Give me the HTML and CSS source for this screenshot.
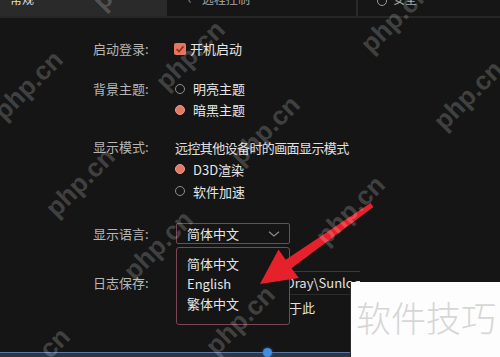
FILE: index.html
```html
<!DOCTYPE html>
<html lang="zh-CN">
<head>
<meta charset="utf-8">
<title>设置</title>
<link rel="stylesheet" href="styles.css">
</head>
<body>
<div class="app">
  <div class="tabs">
    <div class="tab tab-active"><span class="tab-label">常规</span></div>
    <div class="tab tab-remote"><span class="tab-ico">‹</span><span class="tab-label">远程控制</span></div>
    <div class="tab tab-safe"><span class="tab-ico tab-ico-round"></span><span class="tab-label">安全</span></div>
  </div>

  <div class="settings">
    <div class="row row-login">
      <div class="label">启动登录:</div>
      <div class="value">
        <div class="option">
          <span class="checkbox">
            <svg viewBox="0 0 12 12" width="12" height="12"><path d="M2.6 6.2 L5 8.5 L9.5 3.4" fill="none" stroke="#8e2f22" stroke-width="1.6"/></svg>
          </span>
          <span class="opt-text">开机启动</span>
        </div>
      </div>
    </div>

    <div class="row row-theme">
      <div class="label">背景主题:</div>
      <div class="value">
        <div class="option"><span class="radio"></span><span class="opt-text">明亮主题</span></div>
        <div class="option"><span class="radio radio-on"></span><span class="opt-text">暗黑主题</span></div>
      </div>
    </div>

    <div class="row row-mode">
      <div class="label">显示模式:</div>
      <div class="value">
        <div class="option"><span class="desc">远控其他设备时的画面显示模式</span></div>
        <div class="option"><span class="radio radio-on"></span><span class="opt-text">D3D渲染</span></div>
        <div class="option"><span class="radio"></span><span class="opt-text">软件加速</span></div>
      </div>
    </div>

    <div class="row row-lang">
      <div class="label">显示语言:</div>
      <div class="value">
        <div class="select">
          <span class="select-text">简体中文</span>
          <svg class="chevron" viewBox="0 0 12 6" width="12" height="6"><path d="M1 0.8 L6 5 L11 0.8" fill="none" stroke="#8c8c8c" stroke-width="1.2"/></svg>
          <div class="menu">
            <div class="menu-item">简体中文</div>
            <div class="menu-item">English</div>
            <div class="menu-item">繁体中文</div>
          </div>
        </div>
      </div>
    </div>

    <div class="row row-log">
      <div class="label">日志保存:</div>
      <div class="value">
        <div class="path"><span class="path-pre">C:\Program Files\</span>Oray\SunloginClient\log</div>
        <div class="note"><span class="note-text">保存于此</span></div>
      </div>
    </div>
  </div>

  <div class="footer-line"><span class="footer-dot"></span></div>
</div>

<svg class="arrow" viewBox="0 0 500 357" width="500" height="357">
  <polygon points="260,284 278.5,249.5 285.7,259.7 370.6,203 373.4,207 291.5,268.3 298.8,278" fill="#e5222b"/>
</svg>

<div class="badge"><span class="badge-text">软件技巧</span></div>

<div class="watermarks">
  <span class="wm wm-a">php.cn</span>
  <span class="wm wm-b">php.cn</span>
  <span class="wm wm-c">php.cn</span>
  <span class="wm wm-d">php.cn</span>
  <span class="wm wm-e">php.cn</span>
  <span class="wm wm-f">php.cn</span>
  <span class="wm wm-g">php.cn</span>
  <span class="wm wm-h">php.cn</span>
  <span class="wm wm-i">php.cn</span>
  <span class="wm wm-j">php.cn</span>
  <span class="wm wm-l">php.cn</span>
</div>
</body>
</html>
```

FILE: styles.css
```css
* { box-sizing: border-box; }

html, body {
  margin: 0;
  padding: 0;
  width: 500px;
  height: 357px;
  overflow: hidden;
  background: #151515;
}

body {
  position: relative;
  font-family: "Noto Sans CJK SC", "Noto Sans", sans-serif;
  font-size: 13px;
  color: #e4e4e4;
}

.app {
  display: flex;
  flex-direction: column;
  height: 357px;
}

/* ---------- tabs ---------- */
.tabs {
  display: flex;
  height: 18px;
  gap: 2px;
  background: #2a2a2a;
  border-bottom: 2px solid #262626;
  flex: none;
}

.tab {
  display: flex;
  align-items: flex-end;
  height: 16px;
  padding-bottom: 10px;
  line-height: 14px;
  background: #161616;
  color: #a8a8a8;
  font-size: 12px;
}

.tab-active {
  width: 165px;
  background: #2a2a2a;
  color: #dedede;
  padding-left: 10px;
}

.tab-remote {
  width: 189px;
  padding-left: 21px;
}

.tab-safe {
  flex: 1;
  padding-left: 19px;
}

.tab-ico {
  width: 14px;
  color: #9a9a9a;
}

.tab-ico-round {
  display: inline-block;
  width: 10px;
  height: 10px;
  border: 1px solid #9a9a9a;
  border-radius: 50%;
  margin-right: 6px;
}

/* ---------- settings ---------- */
.settings {
  flex: 1;
  display: flex;
  flex-direction: column;
  padding: 20px 0 0 93px;
}

.row {
  display: grid;
  grid-template-columns: 82px auto;
  align-items: start;
}

.label {
  color: #b6b6b6;
  line-height: 21px;
  white-space: nowrap;
}

.value {
  display: flex;
  flex-direction: column;
}

.option {
  display: flex;
  align-items: center;
  height: 21px;
  white-space: nowrap;
}

.row-theme { margin-top: 19px; }

.row-mode { margin-top: 16px; }
.row-mode .option { height: 22px; }
.row-mode .label { line-height: 22px; }

.row-lang { margin-top: 21px; align-items: center; }

.row-log { margin-top: 27px; }
.row-log .label { line-height: 24px; }

.checkbox {
  display: inline-flex;
  width: 12px;
  height: 12px;
  margin-left: -1px;
  margin-right: 4px;
  border-radius: 2px;
  background: #e57660;
}

.radio {
  display: inline-block;
  width: 10px;
  height: 10px;
  border-radius: 50%;
  border: 1px solid #8f8f8f;
  margin-right: 8px;
  flex: none;
}

.radio-on {
  background: #e07a64;
  border-color: #f2a08c;
}

.opt-text { color: #e6e6e6; }

.desc {
  color: #e0e0e0;
  letter-spacing: -0.6px;
}

/* ---------- select ---------- */
.select {
  position: relative;
  display: flex;
  align-items: center;
  justify-content: space-between;
  width: 114px;
  height: 21px;
  margin-left: 1px;
  padding: 0 9px 0 10px;
  border: 1px solid #7c4656;
  border-radius: 2px;
  color: #e6e6e6;
}

.chevron { margin-top: 1px; }

.menu {
  position: absolute;
  top: 23px;
  left: -1px;
  width: 114px;
  height: 78px;
  padding: 6px 0 0 10px;
  background: #151515;
  border: 1px solid #7c4656;
  border-radius: 3px;
  z-index: 2;
}

.menu-item {
  line-height: 20px;
  color: #e6e6e6;
}

/* ---------- log path ---------- */
.path {
  width: 184px;
  height: 24px;
  margin-left: 1px;
  padding-left: 10px;
  padding-right: 10px;
  line-height: 22px;
  border-top: 1px solid #3b3b3b;
  border-bottom: 1px solid #2c2c2c;
  white-space: nowrap;
  overflow: hidden;
  color: #e2e2e2;
}

.path-pre {
  display: inline-block;
  width: 99px;
  overflow: hidden;
  vertical-align: top;
}

.note {
  height: 26px;
  line-height: 26px;
  padding-left: 88px;
}

.note-text { color: #e2e2e2; }

/* ---------- footer ---------- */
.footer-line {
  position: relative;
  flex: none;
  height: 5px;
  border-top: 1px solid #557aa8;
  background: #2f3642;
}

.footer-dot {
  position: absolute;
  left: 263px;
  top: -5px;
  width: 9px;
  height: 9px;
  border-radius: 50%;
  background: #3e8fe0;
  box-shadow: 0 0 3px #2a6fb8;
}

/* ---------- overlays ---------- */
.arrow {
  position: absolute;
  left: 0;
  top: 0;
  z-index: 3;
  pointer-events: none;
}

.badge {
  position: absolute;
  left: 350px;
  top: 282px;
  width: 150px;
  height: 75px;
  background: #fdfdfd;
  border-left: 1px solid #2a2a2a;
  padding-left: 5px;
  z-index: 4;
  display: flex;
  align-items: center;
}

.badge-text {
  font-family: "Noto Sans CJK SC", sans-serif;
  font-weight: 300;
  font-size: 35px;
  line-height: 40px;
  color: #d6d6d6;
  white-space: nowrap;
  margin-top: -6px;
}

.watermarks {
  position: absolute;
  left: 0;
  top: 0;
  width: 500px;
  height: 357px;
  overflow: hidden;
  pointer-events: none;
  z-index: 5;
}

.wm {
  position: absolute;
  font-family: "Liberation Sans", sans-serif;
  font-weight: bold;
  font-size: 26px;
  line-height: 30px;
  color: rgba(255, 255, 255, 0.2);
  white-space: nowrap;
  transform: translate(-50%, -50%) rotate(-45deg);
}

.wm-a { left: 468px; top: 95px; }
.wm-b { left: 395px; top: 18px; }
.wm-c { left: 265px; top: 130px; }
.wm-d { left: 190px; top: 55px; }
.wm-e { left: 127px; top: -25px; }
.wm-f { left: 28px; top: 85px; }
.wm-g { left: 80px; top: 182px; }
.wm-h { left: 350px; top: 210px; }
.wm-i { left: 158px; top: 245px; }
.wm-j { left: 240px; top: 320px; }
.wm-l { left: 35px; top: 362px; }
```
